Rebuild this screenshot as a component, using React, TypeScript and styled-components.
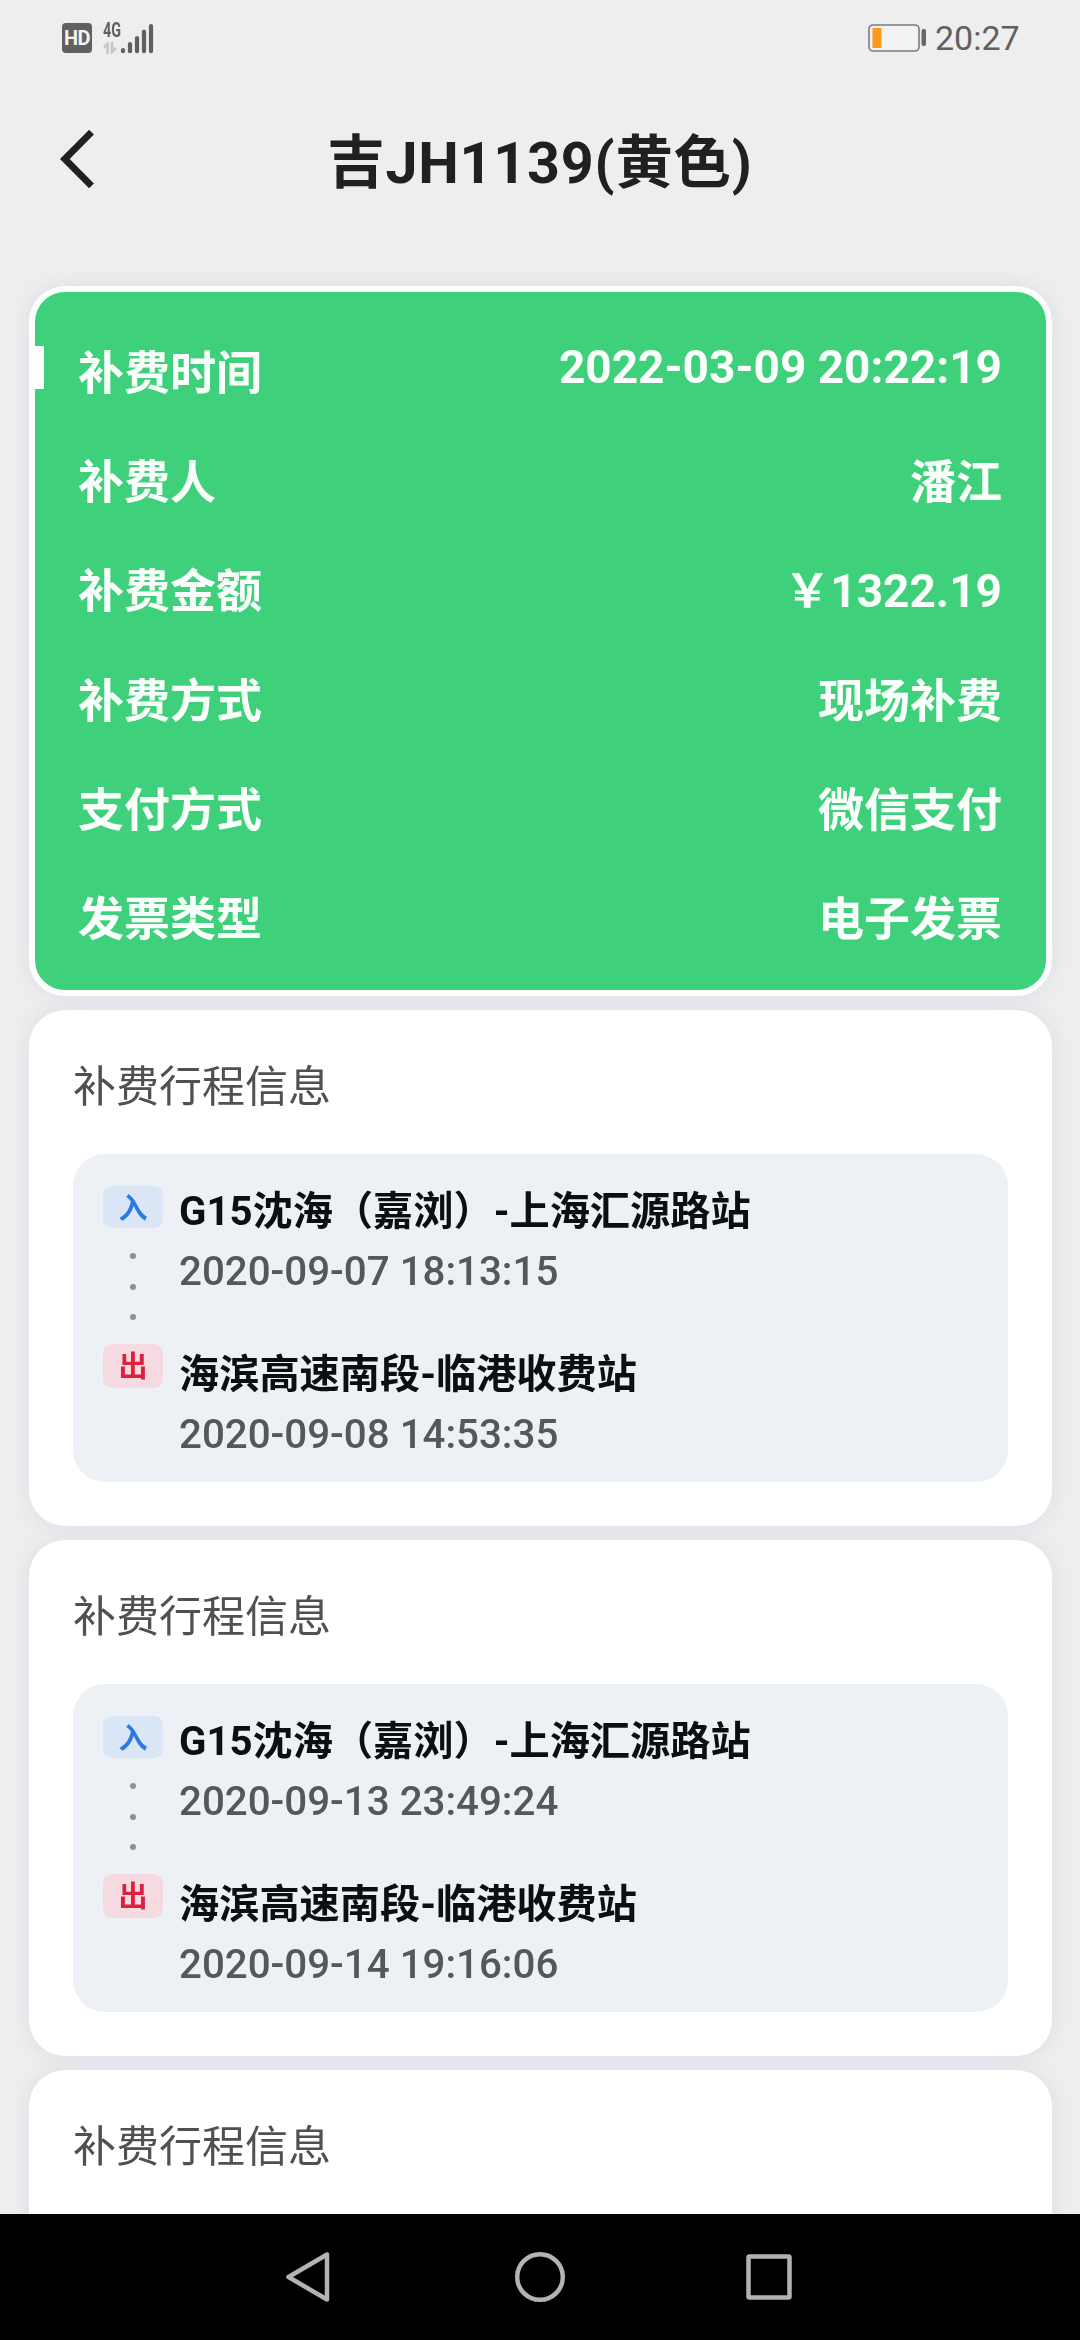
import React from "react";
import styled, { createGlobalStyle } from "styled-components";

const GlobalStyle = createGlobalStyle`
  * { box-sizing: border-box; }
  body {
    margin: 0;
    background: #eeeeee;
    font-family: Roboto, "Noto Sans CJK SC", sans-serif;
  }
`;

const Screen = styled.div`
  width: 1080px;
  height: 2340px;
  display: flex;
  flex-direction: column;
  overflow: hidden;
  background: #eeeeee;
`;

const StatusBar = styled.header`
  flex: none;
  height: 76px;
  padding: 0 62px;
  display: flex;
  justify-content: space-between;
  align-items: center;
`;

const StatusGroup = styled.div<{ $gap: number }>`
  display: flex;
  align-items: center;
  gap: ${(p) => p.$gap}px;
`;

const HdBadge = styled.span`
  width: 30px;
  height: 30px;
  border-radius: 4px;
  background: #606060;
  color: #f4f4f4;
  font-size: 20px;
  font-weight: 700;
  line-height: 31px;
  letter-spacing: -0.6px;
  text-align: center;
`;

const NetworkType = styled.div`
  width: 18px;
  height: 32px;
  margin-right: -12px;
  display: flex;
  flex-direction: column;
  justify-content: space-between;
  color: #606060;
  font-size: 20px;
  font-weight: 700;
  line-height: 16px;
  white-space: nowrap;
`;

const NetworkLabel = styled.span`
  width: 25px;
  transform: scaleX(0.72);
  transform-origin: left;
`;

const Clock = styled.time`
  width: 85px;
  color: #606060;
  font-size: 34px;
  line-height: 40px;
  margin-right: -2px;
`;

const TitleBar = styled.div`
  flex: none;
  height: 210px;
  padding: 54px 58px 0;
  display: grid;
  grid-template-columns: 60px 1fr 60px;
  align-items: start;
`;

const BackIcon = styled.svg`
  width: 40px;
  height: 60px;
`;

const PageTitle = styled.h1`
  margin: 0;
  color: #202020;
  font-size: 57.4px;
  font-weight: 700;
  line-height: 68px;
  letter-spacing: 0.8px;
  text-align: center;
  white-space: nowrap;
`;

const Viewport = styled.div`
  flex: 1;
  min-height: 0;
  overflow: hidden;
  margin-top: -30px;
  padding-top: 30px;
`;

const CardList = styled.main`
  padding: 0 28px 0 29px;
  display: flex;
  flex-direction: column;
  gap: 14px;
  filter: drop-shadow(0 0 9px rgba(190, 192, 222, 0.38));
`;

const PaymentCard = styled.section`
  flex: none;
  height: 710px;
  border: 6px solid #fdfffd;
  border-radius: 36px;
  background: #3fd07b;
  display: flex;
`;

const Marker = styled.div`
  flex: none;
  width: 9px;
  height: 43px;
  margin-top: 54px;
  background: #ffffff;
`;

const PaymentRows = styled.dl`
  flex: 1;
  margin: 0;
  padding: 48px 44px 0 34px;
  display: flex;
  flex-direction: column;
  gap: 42px;
`;

const PaymentRow = styled.div`
  display: flex;
  justify-content: space-between;
  align-items: flex-start;
  color: #fbfffc;
  font-size: 46px;
  font-weight: 700;
  line-height: 67.2px;
`;

const PaymentLabel = styled.dt``;

const PaymentValue = styled.dd<{ $compact?: boolean }>`
  margin: 0;
  line-height: ${(p) => (p.$compact ? "54px" : "inherit")};
`;

const TripCard = styled.section`
  flex: none;
  height: 516px;
  padding: 43px 44px 0;
  border-radius: 36px;
  background: #ffffff;
`;

const TripTitle = styled.h2`
  margin: 0;
  height: 101px;
  color: #505050;
  font-size: 43px;
  font-weight: 400;
  line-height: 68px;
`;

const TripPanel = styled.div`
  height: 328px;
  padding: 32px 30px 0;
  border-radius: 32px;
  background: #edf0f4;
  display: grid;
  grid-template-columns: 60px 1fr;
  column-gap: 16px;
`;

const Track = styled.div`
  display: flex;
  flex-direction: column;
  align-items: center;
`;

const Badge = styled.span<{ $kind: "in" | "out" }>`
  width: 60px;
  height: ${(p) => (p.$kind === "in" ? 42 : 44)}px;
  border-radius: 9px;
  background: ${(p) => (p.$kind === "in" ? "#dae6f5" : "#f5dbe1")};
  color: ${(p) => (p.$kind === "in" ? "#2c78e4" : "#de1f3d")};
  font-size: 29px;
  font-weight: 700;
  line-height: 47px;
  text-align: center;
`;

const Dots = styled.div`
  height: 116px;
  padding-top: 25px;
  display: flex;
  flex-direction: column;
  gap: 24.5px;
`;

const Dot = styled.i`
  width: 6px;
  height: 6px;
  border-radius: 50%;
  background: #8e9094;
`;

const Stops = styled.div`
  display: flex;
  flex-direction: column;
  gap: 48px;
`;

const Station = styled.div`
  color: #0c0e10;
  font-size: 40.2px;
  font-weight: 700;
  line-height: 60px;
  margin-top: -4px;
  white-space: nowrap;
`;

const StopTime = styled.div`
  height: 59px;
  color: #56575b;
  font-size: 40.3px;
  font-weight: 500;
  line-height: 59px;
`;

const NavBar = styled.nav`
  flex: none;
  height: 126px;
  background: #000000;
  display: flex;
  justify-content: center;
  align-items: center;
  gap: 177px;
`;

const NavIcon = styled.svg`
  width: 52px;
  height: 52px;
  fill: none;
  stroke: #b3b3b3;
  stroke-width: 4.5;
  stroke-linejoin: round;
`;

const payment = [
  { label: "补费时间", value: "2022-03-09 20:22:19", compact: true },
  { label: "补费人", value: "潘江" },
  { label: "补费金额", value: "￥1322.19" },
  { label: "补费方式", value: "现场补费" },
  { label: "支付方式", value: "微信支付" },
  { label: "发票类型", value: "电子发票" },
];

const ENTRY = "G15沈海（嘉浏）-上海汇源路站";
const EXIT = "海滨高速南段-临港收费站";

const trips = [
  { enter: "2020-09-07 18:13:15", leave: "2020-09-08 14:53:35" },
  { enter: "2020-09-13 23:49:24", leave: "2020-09-14 19:16:06" },
];

function Trip({ enter, leave }: { enter: string; leave: string }) {
  return (
    <TripCard>
      <TripTitle>补费行程信息</TripTitle>
      <TripPanel>
        <Track>
          <Badge $kind="in">入</Badge>
          <Dots>
            <Dot />
            <Dot />
            <Dot />
          </Dots>
          <Badge $kind="out">出</Badge>
        </Track>
        <Stops>
          <div>
            <Station>{ENTRY}</Station>
            <StopTime>{enter}</StopTime>
          </div>
          <div>
            <Station>{EXIT}</Station>
            <StopTime>{leave}</StopTime>
          </div>
        </Stops>
      </TripPanel>
    </TripCard>
  );
}

export default function App() {
  return (
    <Screen>
      <GlobalStyle />
      <StatusBar>
        <StatusGroup $gap={11}>
          <HdBadge>HD</HdBadge>
          <NetworkType>
            <NetworkLabel>4G</NetworkLabel>
            <svg width="14" height="12" viewBox="0 0 14 12" fill="none" stroke="#c6c6c6" strokeWidth="2.6">
              <path d="M4.5 12V2L1 5.5M9 0v10l4-4" />
            </svg>
          </NetworkType>
          <svg width="34" height="32" viewBox="0 0 34 32" stroke="#606060" strokeWidth="4.2" strokeLinecap="round">
            <path d="M3 28v1.2M10 22v7.2M17 16v13.2M24 9.500v19.700M31 4v25.200" />
          </svg>
        </StatusGroup>
        <StatusGroup $gap={8}>
          <svg width="59" height="28" viewBox="0 0 59 28">
            <rect x="1" y="1" width="50" height="26" rx="4" fill="#f3f3f3" stroke="#7a7a7a" strokeWidth="1.6" />
            <rect x="4.500" y="4" width="9" height="20" fill="#fb9a1c" />
            <rect x="53.500" y="5" width="4.500" height="17" rx="2" fill="#666" />
          </svg>
          <Clock>20:27</Clock>
        </StatusGroup>
      </StatusBar>
      <TitleBar>
        <BackIcon viewBox="0 0 40 60" fill="none" stroke="#202020" strokeWidth="6.800">
          <path d="M33.500 2.200L6.800 29L33.500 55.800" />
        </BackIcon>
        <PageTitle>吉JH1139(黄色)</PageTitle>
      </TitleBar>
      <Viewport>
        <CardList>
          <PaymentCard>
            <Marker />
            <PaymentRows>
              {payment.map((row) => (
                <PaymentRow key={row.label}>
                  <PaymentLabel>{row.label}</PaymentLabel>
                  <PaymentValue $compact={row.compact}>{row.value}</PaymentValue>
                </PaymentRow>
              ))}
            </PaymentRows>
          </PaymentCard>
          {trips.map((trip) => (
            <Trip key={trip.enter} {...trip} />
          ))}
          <TripCard>
            <TripTitle>补费行程信息</TripTitle>
          </TripCard>
        </CardList>
      </Viewport>
      <NavBar>
        <NavIcon viewBox="0 0 52 52">
          <path d="M3.500 26L42 3.500V48.500Z" />
        </NavIcon>
        <NavIcon viewBox="0 0 52 52">
          <circle cx="26" cy="26" r="22.800" />
        </NavIcon>
        <NavIcon viewBox="0 0 52 52">
          <rect x="5.500" y="5.500" width="41" height="41" rx="1" />
        </NavIcon>
      </NavBar>
    </Screen>
  );
}
